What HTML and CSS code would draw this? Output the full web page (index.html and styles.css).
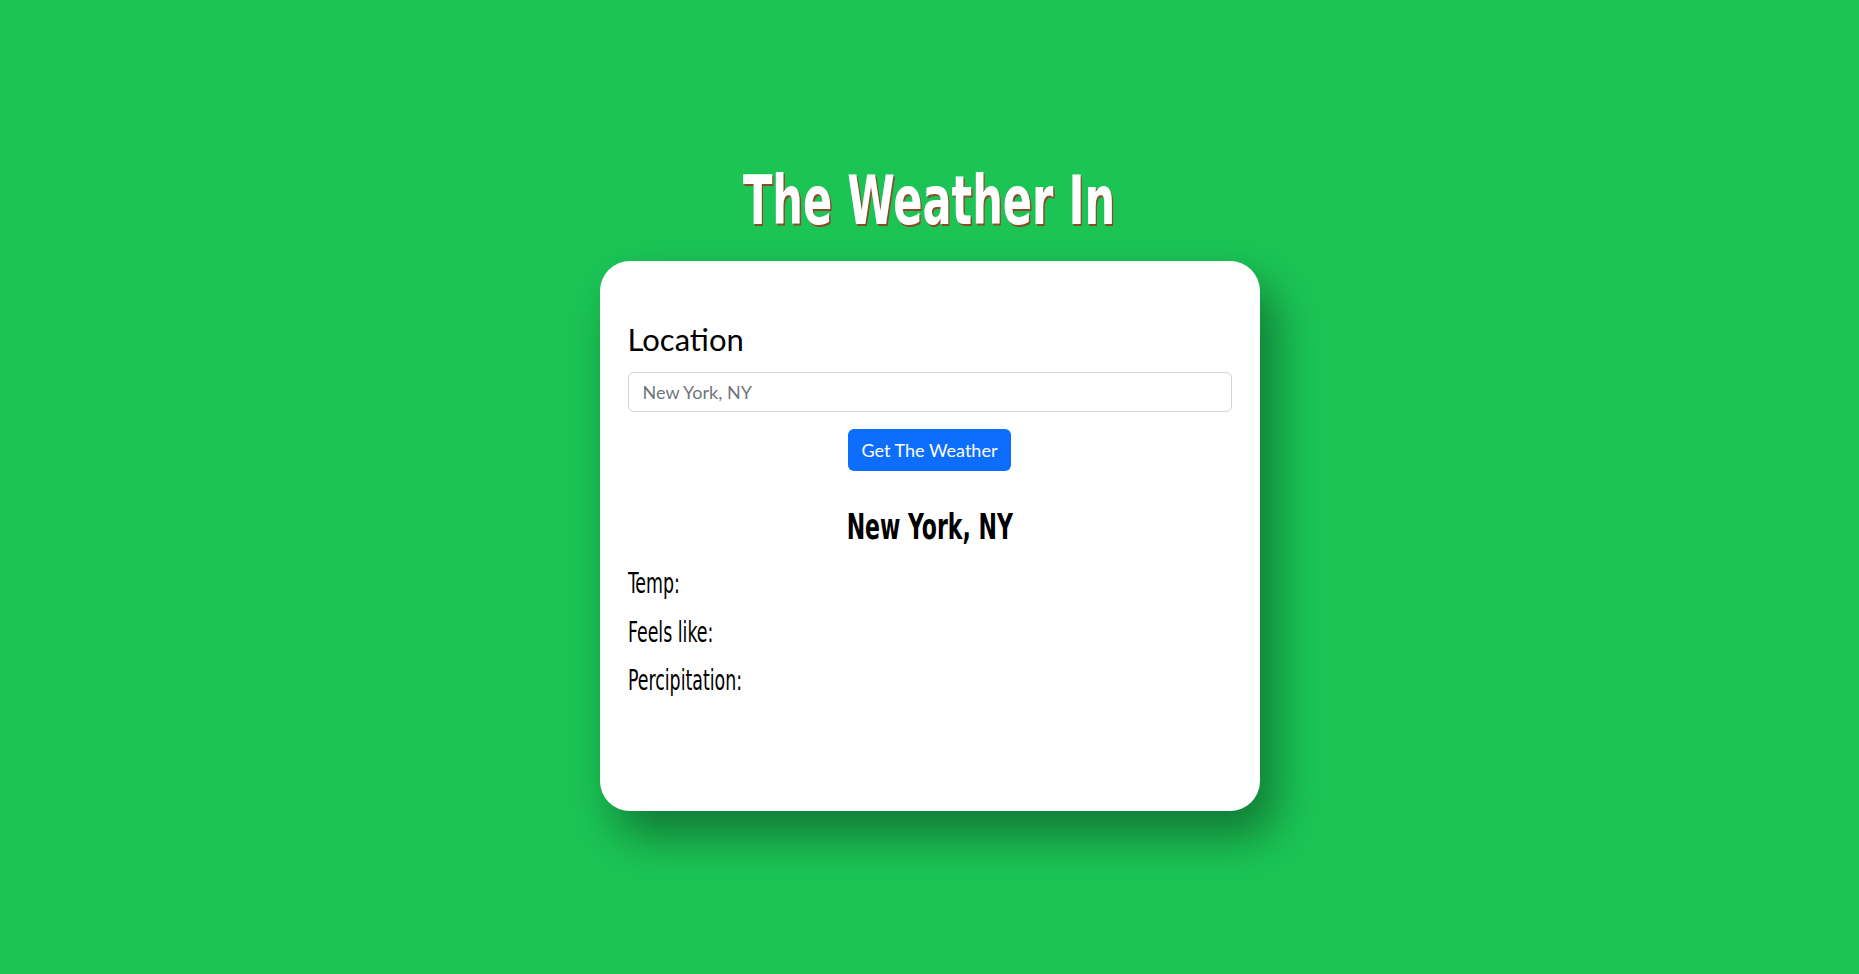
FILE: index.html
```html
<!DOCTYPE html>
<html lang="en">
<head>
<meta charset="utf-8">
<title>The Weather In</title>
<link rel="stylesheet" href="styles.css">
</head>
<body>
<main class="page">
  <h1 class="title"><span class="title-text">The Weather In</span></h1>
  <section class="card">
    <label class="loc-label" for="loc">Location</label>
    <input id="loc" class="loc-input" type="text" placeholder="New York, NY">
    <div class="btn-row"><button class="btn" type="button">Get The Weather</button></div>
    <h2 class="city"><span class="city-text">New York, NY</span></h2>
    <div class="stat"><span class="stat-text">Temp:</span></div>
    <div class="stat"><span class="stat-text">Feels like:</span></div>
    <div class="stat"><span class="stat-text">Percipitation:</span></div>
  </section>
</main>
</body>
</html>
```

FILE: styles.css
```css
html, body {
  margin: 0;
  padding: 0;
  height: 100%;
}
body {
  background: #1bc455;
  font-family: "Segoe UI", Lato, "Open Sans", sans-serif;
  overflow: hidden;
}
.page {
  display: flex;
  flex-direction: column;
  align-items: center;
  padding-top: 166px;
}
.title {
  margin: 0 0 25px;
  font-family: "DejaVu Sans Condensed", "DejaVu Sans", sans-serif;
  font-weight: 700;
  font-size: 68px;
  line-height: 70px;
  color: #fff;
  text-shadow: 2px 2px 0 #8b4a2b;
  text-align: center;
}
.title-text {
  display: inline-block;
  transform: scaleX(0.705);
}
.card {
  box-sizing: border-box;
  width: 660px;
  height: 550px;
  background: #fff;
  border-radius: 30px;
  padding: 59px 28px 0;
  box-shadow: 15px 25px 45px rgba(0, 0, 0, 0.38);
  display: flex;
  flex-direction: column;
}
.loc-label {
  font-size: 31px;
  line-height: 38px;
  color: #000;
  margin-bottom: 14px;
}
.loc-input {
  box-sizing: border-box;
  width: 100%;
  height: 40px;
  border: 1px solid #ced4da;
  border-radius: 6px;
  padding: 0 14px;
  font-family: inherit;
  font-size: 18px;
  color: #212529;
  outline: none;
}
.loc-input::placeholder {
  color: #6f757b;
}
.btn-row {
  display: flex;
  justify-content: center;
  margin-top: 17px;
}
.btn {
  height: 42px;
  padding: 0 14px;
  border: none;
  border-radius: 6px;
  background: #0d6efd;
  color: #fff;
  font-family: inherit;
  font-size: 18px;
}
.city {
  margin: 34px 0 11px;
  font-family: "DejaVu Sans Condensed", "DejaVu Sans", sans-serif;
  font-weight: 700;
  font-size: 35px;
  line-height: 44px;
  text-align: center;
  color: #000;
}
.city-text {
  display: inline-block;
  transform: scaleX(0.7);
}
.stat {
  font-family: "DejaVu Sans Condensed", "DejaVu Sans", sans-serif;
  font-size: 28px;
  line-height: 48.5px;
  color: #000;
}
.stat-text {
  display: inline-block;
  transform: scaleX(0.69);
  transform-origin: left center;
}
```
